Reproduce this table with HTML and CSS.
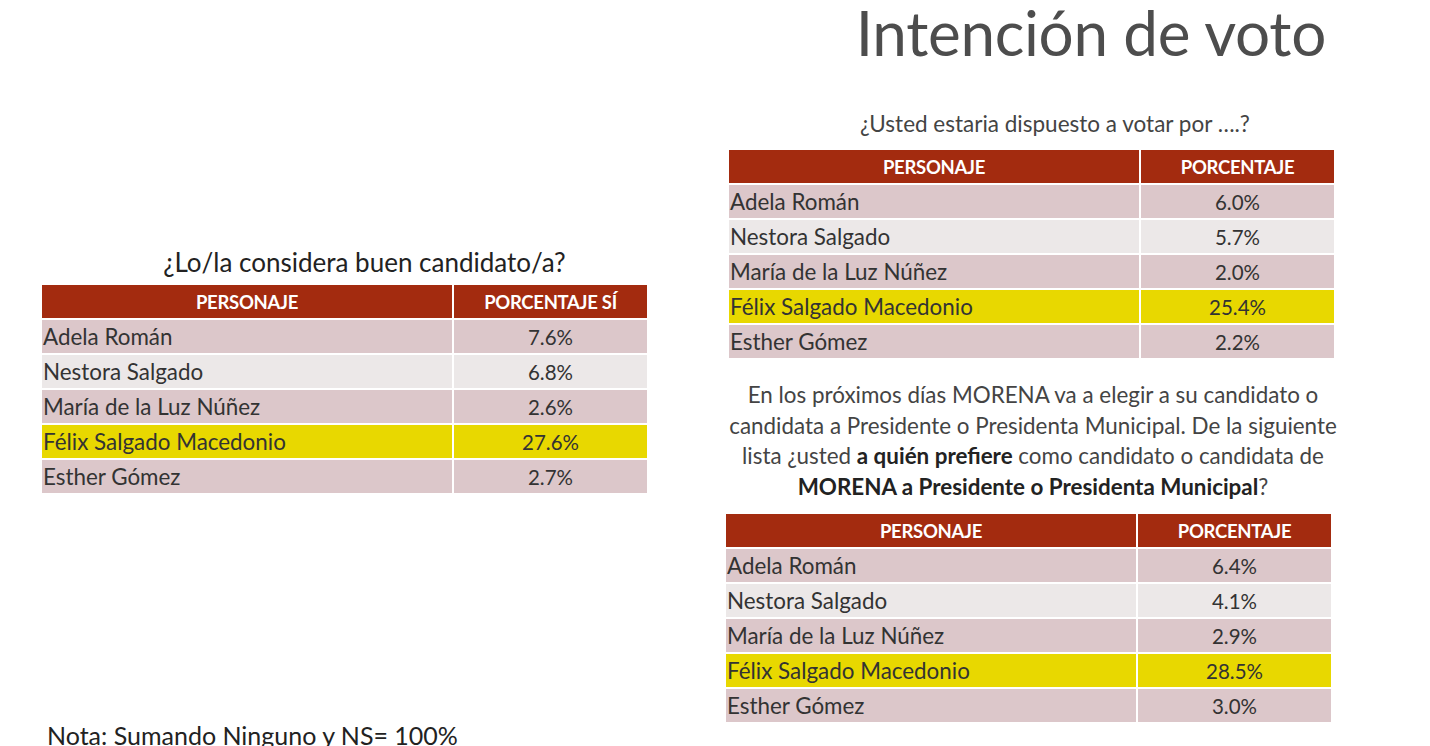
FILE: index.html
```html
<!DOCTYPE html>
<html lang="es">
<head>
<meta charset="utf-8">
<title>Intención de voto</title>
<link rel="stylesheet" href="styles.css">
</head>
<body>
<div class="slide">
  <header class="title-row">
    <h1 class="title">Intención de voto</h1>
  </header>
  <div class="content">
    <section class="col-left">
      <h2 class="question q-left">¿Lo/la considera buen candidato/a?</h2>
      <table class="poll">
        <thead><tr><th class="c1">PERSONAJE</th><th class="c2">PORCENTAJE SÍ</th></tr></thead>
        <tbody>
          <tr class="pink"><td>Adela Román</td><td class="pct">7.6%</td></tr>
          <tr class="light"><td>Nestora Salgado</td><td class="pct">6.8%</td></tr>
          <tr class="pink"><td>María de la Luz Núñez</td><td class="pct">2.6%</td></tr>
          <tr class="hl"><td>Félix Salgado Macedonio</td><td class="pct">27.6%</td></tr>
          <tr class="pink"><td>Esther Gómez</td><td class="pct">2.7%</td></tr>
        </tbody>
      </table>
      <p class="note">Nota: Sumando Ninguno y NS= 100%</p>
    </section>
    <section class="col-right">
      <h2 class="question q-right">¿Usted estaria dispuesto a votar por ….?</h2>
      <table class="poll t1">
        <thead><tr><th class="c1">PERSONAJE</th><th class="c2">PORCENTAJE</th></tr></thead>
        <tbody>
          <tr class="pink"><td>Adela Román</td><td class="pct">6.0%</td></tr>
          <tr class="light"><td>Nestora Salgado</td><td class="pct">5.7%</td></tr>
          <tr class="pink"><td>María de la Luz Núñez</td><td class="pct">2.0%</td></tr>
          <tr class="hl"><td>Félix Salgado Macedonio</td><td class="pct">25.4%</td></tr>
          <tr class="pink"><td>Esther Gómez</td><td class="pct">2.2%</td></tr>
        </tbody>
      </table>
      <p class="para">En los próximos días MORENA va a elegir a su candidato o<br>candidata a Presidente o Presidenta Municipal. De la siguiente<br>lista ¿usted <b>a quién prefiere</b> como candidato o candidata de<br><b>MORENA a Presidente o Presidenta Municipal</b>?</p>
      <table class="poll t2">
        <thead><tr><th class="c1">PERSONAJE</th><th class="c2">PORCENTAJE</th></tr></thead>
        <tbody>
          <tr class="pink"><td>Adela Román</td><td class="pct">6.4%</td></tr>
          <tr class="light"><td>Nestora Salgado</td><td class="pct">4.1%</td></tr>
          <tr class="pink"><td>María de la Luz Núñez</td><td class="pct">2.9%</td></tr>
          <tr class="hl"><td>Félix Salgado Macedonio</td><td class="pct">28.5%</td></tr>
          <tr class="pink"><td>Esther Gómez</td><td class="pct">3.0%</td></tr>
        </tbody>
      </table>
    </section>
  </div>
</div>
</body>
</html>
```

FILE: styles.css
```css
html, body {
  margin: 0;
  padding: 0;
  background: #ffffff;
}
body {
  font-family: Lato, "Open Sans", "Liberation Sans", sans-serif;
  color: #333;
  width: 1430px;
  height: 746px;
  overflow: hidden;
}
.slide {
  display: flex;
  flex-direction: column;
}
.title-row {
  display: flex;
  justify-content: flex-end;
  padding-right: 104px;
  height: 70px;
}
.title {
  margin: 0;
  font-weight: 400;
  font-size: 62px;
  line-height: 64px;
  color: #4d4d4d;
  letter-spacing: -0.3px;
}
.content {
  display: flex;
  align-items: flex-start;
}
.col-left {
  display: flex;
  flex-direction: column;
  width: 605px;
  margin-left: 42px;
  padding-top: 176px;
}
.col-right {
  display: flex;
  flex-direction: column;
  width: 612px;
  margin-left: 79px;
  padding-top: 40px;
}
.question {
  margin: 0;
  font-weight: 400;
  text-align: center;
}
.q-left {
  font-size: 26px;
  line-height: 32px;
  color: #222;
  margin-left: 40px;
  margin-bottom: 7px;
  white-space: nowrap;
}
.q-right {
  font-size: 22.5px;
  line-height: 28px;
  color: #444;
  margin-bottom: 12px;
  margin-left: 46px;
  white-space: nowrap;
}
.poll {
  border-collapse: separate;
  border-spacing: 0;
  width: 605px;
  table-layout: fixed;
}
.t1 { margin-left: 3px; }
.t2 { margin-left: 0; }
.poll th {
  background: #a32b0f;
  color: #fff;
  font-weight: 700;
  font-size: 18.5px;
  height: 33px;
  padding: 0;
  border-bottom: 2px solid #fff;
  text-align: center;
  letter-spacing: -0.3px;
}
.poll th.c1 { width: 410px; border-right: 2px solid #fff; }
.poll td {
  height: 33px;
  padding: 0 0 0 1px;
  font-size: 22.4px;
  color: #333;
  border-bottom: 2px solid #fff;
  white-space: nowrap;
}
.poll td:first-child { border-right: 2px solid #fff; }
.poll td.pct { text-align: center; padding: 0; font-size: 20.5px; }
.pink td { background: #dcc7ca; }
.light td { background: #ece8e8; }
.hl td { background: #e8d800; }
.note {
  margin: 225px 0 0 5px;
  font-size: 25px;
  line-height: 30px;
  color: #222;
  white-space: nowrap;
}
.para {
  margin: 20px 0 12px 2px;
  text-align: center;
  font-size: 22.4px;
  line-height: 30.5px;
  color: #444;
  white-space: nowrap;
}
.para b {
  font-weight: 700;
  color: #222;
}
```
